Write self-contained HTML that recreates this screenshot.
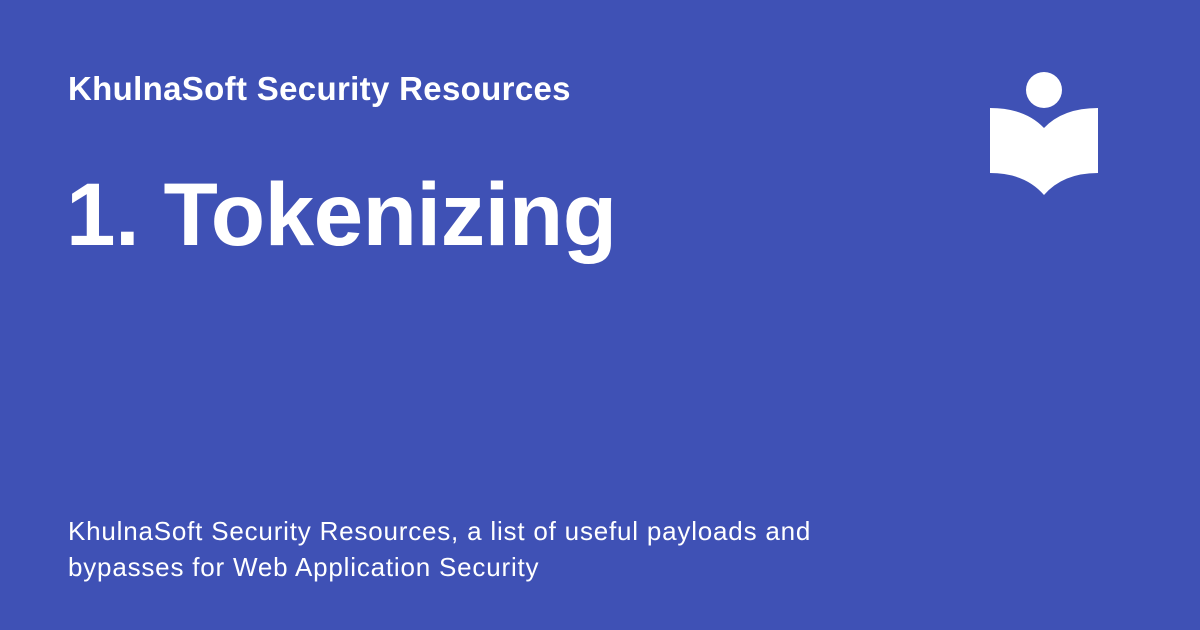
<!DOCTYPE html>
<html><head><style>
body{margin:0;width:1200px;height:630px;background:#3f51b5;font-family:"Liberation Sans",sans-serif;color:#fff;position:relative;overflow:hidden}
.h{position:absolute;left:68px;top:70px;font-size:33px;font-weight:bold;letter-spacing:0.33px}
.t{position:absolute;left:66px;top:163px;font-size:89px;font-weight:bold;letter-spacing:-0.5px}
.d{position:absolute;left:68px;top:513px;font-size:26px;line-height:36px;width:800px;letter-spacing:0.8px}
svg{position:absolute;left:0;top:0}
</style></head><body>
<div class="h">KhulnaSoft Security Resources</div>
<div class="t">1. Tokenizing</div>
<div class="d">KhulnaSoft Security Resources, a list of useful payloads and<br>bypasses for Web Application Security</div>
<svg width="1200" height="630"><circle cx="1044" cy="90" r="18" fill="#fff"/>
<path d="M990 108 Q1025 108 1044 128 Q1063 108 1098 108 L1098 173 Q1063 173 1044 195 Q1025 173 990 173 Z" fill="#fff"/></svg>
</body></html>
